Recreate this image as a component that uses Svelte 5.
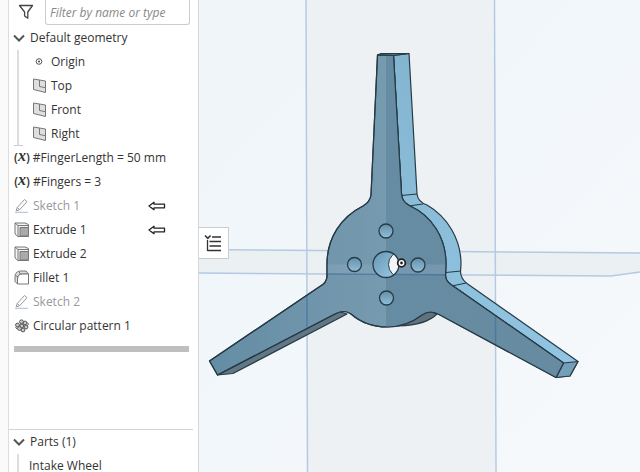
<script>
    let filter = '';

    const planes = ['Top', 'Front', 'Right'];

    const features = [
        { icon: 'variable', name: '#FingerLength = 50 mm' },
        { icon: 'variable', name: '#Fingers = 3' },
        { icon: 'sketch', name: 'Sketch 1', hidden: true, arrow: true },
        { icon: 'extrude', name: 'Extrude 1', arrow: true },
        { icon: 'extrude', name: 'Extrude 2' },
        { icon: 'fillet', name: 'Fillet 1' },
        { icon: 'sketch', name: 'Sketch 2', hidden: true },
        { icon: 'pattern', name: 'Circular pattern 1' }
    ];

    const holes = [[386, 231], [354.5, 264.5], [418, 265], [386.5, 298]];

    const petals = [[7.5, 3.8], [11, 5], [3.5, 7], [7.8, 8], [12, 9], [5.5, 10.5], [9, 12]];
</script>

<div class="workspace">
    <aside>
        <div class="filter">
            <svg width="16" height="16" viewBox="0 0 16 16" fill="none" stroke="#444" stroke-width="1.3">
                <path d="M1.5 1.5h13L9.8 8v6.2L6.6 12V8z" stroke-linejoin="round" />
            </svg>
            <input type="text" aria-label="Filter" placeholder="Filter by name or type" bind:value={filter} />
        </div>

        <div class="features">
            <button class="heading">
                <svg width="12" height="12" viewBox="0 0 12 12" fill="none" stroke="#555" stroke-width="2"><path d="M1 3.5l5 5 5-5" /></svg>
                Default geometry
            </button>
            <ul class="geometry">
                <li>
                    <svg width="16" height="16" viewBox="0 0 16 16" fill="none" stroke="#444"><circle cx="7" cy="7.5" r="2.8" stroke-width=".9" /><circle cx="7" cy="7.5" r="1" fill="#444" stroke="none" /></svg>
                    Origin
                </li>
                {#each planes as plane}
                    <li>
                        <svg width="16" height="16" viewBox="0 0 16 16" fill="#dedede" stroke="#777">
                            <path d="M1.500 1l12 2v11.500l-12-3z" /><path d="M7.500 2v6.500l6 1.200" fill="none" />
                        </svg>
                        {plane}
                    </li>
                {/each}
            </ul>

            <ul class="history">
                {#each features as feature}
                    <li class:hidden={feature.hidden}>
                        {#if feature.icon === 'variable'}
                            <span class="variable">(<i>x</i>)</span>
                        {:else}
                            <svg width="16" height="16" viewBox="0 0 16 16" fill="none" stroke="#777">
                                {#if feature.icon === 'sketch'}
                                    <path d="M3.2 9.5L10.5 1.500l2.500 2.200-7.300 8-3.600 1.200z" stroke="#999" /><path d="M3.200 9.500l2.500 2.200" stroke="#999" /><path d="M1 14.300h13" stroke="#a9b9d8" />
                                {:else if feature.icon === 'extrude'}
                                    <path d="M1 1h10l3.500 1.500v12H4L1 12z" fill="#f4f4f4" /><path d="M1 1l3 2.500v11M4 3.500h10.500" /><path d="M6 5.500h8.500v8.500H6z" fill="#aaa" />
                                {:else if feature.icon === 'fillet'}
                                    <path d="M1 11.500V7q0-6 6-6h5l2.500 3h-6q-5 0-5 5V14z" fill="#ddd" /><path d="M3.500 14V9q0-5 5-5h6V14z" fill="#fff" /><path d="M1.500 5.500l3 1.500M5 1.500l1.500 3" />
                                {:else}
                                    {#each petals as [x, y]}
                                        <circle cx={x} cy={y} r="1.9" fill="#ccc" stroke="#555" />
                                    {/each}
                                    <path d="M13 4.500l1.500 1.500-1 1.500M1.500 9l1.500 2" stroke="#555" />
                                {/if}
                            </svg>
                        {/if}
                        <span class="name">{feature.name}</span>
                        {#if feature.arrow}
                            <svg class="arrow" width="18" height="10" viewBox="0 0 18 10" fill="#fff" stroke="#222" stroke-width="1.3" stroke-linejoin="round">
                                <path d="M1 5l5-3.7V3.2h10.5v3.6H6v1.9z" />
                            </svg>
                        {/if}
                    </li>
                {/each}
            </ul>
            <div class="rollback"></div>
        </div>

        <div class="parts">
            <button class="heading">
                <svg width="12" height="12" viewBox="0 0 12 12" fill="none" stroke="#555" stroke-width="2"><path d="M1 3.5l5 5 5-5" /></svg>
                Parts (1)
            </button>
            <ul><li>Intake Wheel</li></ul>
        </div>
    </aside>

    <main>
        <svg class="view" viewBox="199 0 441 472" preserveAspectRatio="xMinYMin slice">
            <defs>
                <linearGradient id="sky" x1="0" y1="0" x2="1" y2="1">
                    <stop offset="0" stop-color="#eff5f9" /><stop offset="1" stop-color="#f6f9fc" />
                </linearGradient>
                <linearGradient id="side" x1="0" y1="0" x2="0" y2="1">
                    <stop offset="0" stop-color="#83b5d0" /><stop offset="1" stop-color="#92c5e2" />
                </linearGradient>
                <linearGradient id="bore" x1="0" y1="0" x2="1" y2="1">
                    <stop offset="0" stop-color="#6697b4" /><stop offset="1" stop-color="#9ccbe5" />
                </linearGradient>
                <linearGradient id="hole" x1="0" y1="0" x2="0" y2="1">
                    <stop offset="0" stop-color="#648fa8" /><stop offset="1" stop-color="#92bfd8" />
                </linearGradient>
                <linearGradient id="leftFace" gradientUnits="userSpaceOnUse" x1="210" y1="0" x2="386" y2="0">
                    <stop offset="0" stop-color="#658da5" /><stop offset="1" stop-color="#779bb0" />
                </linearGradient>
                <linearGradient id="rightFace" gradientUnits="userSpaceOnUse" x1="386" y1="0" x2="563" y2="0">
                    <stop offset="0" stop-color="#668da3" /><stop offset="1" stop-color="#688ca1" />
                </linearGradient>
                <path id="face" d="M377.5 55L393.5 55.5L401.5 194Q402 202 410 206C432 216 446 238 446 264L445.500 276Q446 282 453 286L563.500 363L556 377.500L440 315Q430 309 422 315Q406 327 387 327Q366 327 351 314Q344 309 335 314L217.500 375L209.500 361L319 287Q327 283 327 276V264C327 238 341 217 363 206Q370 202 371 195Z" />
                <clipPath id="faceClip"><use href="#face" /></clipPath>
                <clipPath id="boreClip"><circle cx="386" cy="264.500" r="13" /></clipPath>
            </defs>

            <rect x="199" width="441" height="472" fill="url(#sky)" />
            <path d="M306 0h188l1 472H307.500z" fill="#edf1f4" />
            <path d="M199 250L640 253V272L611 276L199 273z" fill="#ebf0f3" />
            <g fill="none" stroke="#b4cae3" stroke-width="1.500">
                <path d="M306 0L307.500 472M494.500 0L496 472" />
                <path d="M199 249.500L640 253M199 273L611 276L640 272" />
            </g>

            <g stroke="#263b46" stroke-width="1.200" stroke-linejoin="round">
                <path d="M217.500 375L233 373.500L347 314L338 311z" fill="#617785" />
                <path d="M399 326Q426 325 437 314L428 311z" fill="#60737e" />
                <path d="M393.500 55.500L409 53.500L417 194Q418 202 427 205C448 217 461 240 461 264L460.500 272Q461 279 467 283.500L578 361.500L570 376L556 377.500L563.500 363L453 286Q446 282 445.500 276V264C446 238 432 216 410 206Q402 202 401.500 194z" fill="url(#side)" />
                <path d="M377.500 55L381 53.500L409 53.500L393.500 55.500z" fill="#577484" />
                <path d="M563.500 363L578 361.500L570 376L556 377.500z" fill="#739fb8" />
                <path d="M401.500 195.500L417 194M408.500 206L423 204M446 272.500L461 271M452 286L466 283" />
                <use href="#face" fill="url(#leftFace)" />
            </g>
            <g clip-path="url(#faceClip)">
                <path d="M386 50V330H580V50z" fill="url(#rightFace)" />
                <path d="M386 330H580V390H386z" fill="url(#rightFace)" />
                <path d="M320 264.500H450V274H320z" fill="#94afc3" opacity=".35" />
                <path d="M306 0L307.500 472M494.500 0L496 472M199 273L611 276" stroke="#416f9e" stroke-width="1.500" opacity=".65" />
            </g>
            <use href="#face" fill="none" stroke="#263b46" stroke-width="1.200" />

            {#each holes as [x, y]}
                <circle cx={x} cy={y} r="7" fill="url(#hole)" stroke="#263b46" stroke-width="1.300" />
            {/each}
            <circle cx="386" cy="264.500" r="13" fill="url(#bore)" />
            <circle cx="401.500" cy="264.500" r="13" fill="#f2f5f7" stroke="#263b46" clip-path="url(#boreClip)" />
            <circle cx="386" cy="264.500" r="13" fill="none" stroke="#263b46" stroke-width="1.300" />
            <circle cx="401.500" cy="263" r="3.800" fill="#fff" stroke="#222" stroke-width="1.800" />
            <circle cx="401.500" cy="263" r="1.400" fill="#222" />
        </svg>

        <button class="tab" aria-label="Toggle feature list">
            <svg width="18" height="18" viewBox="0 0 18 18" fill="none" stroke="#333" stroke-width="1.300">
                <path d="M1 1.500l2.800 2.800L6.600 1.500" stroke-width="1.600" /><path d="M8 3h9M3.500 6v11M5.500 7.500H17M5.500 12H17M3.500 16.500H17" />
            </svg>
        </button>
    </main>
</div>

<style>
    :global(body) {
        margin: 0;
    }

    .workspace {
        display: flex;
        height: 100vh;
        overflow: hidden;
        padding-left: 8px;
        box-sizing: border-box;
        background: #fafafa;
        font: 12px/24px "Open Sans", sans-serif;
        color: #333;
    }

    aside {
        display: flex;
        flex-direction: column;
        flex: none;
        width: 189px;
        border-left: 1px solid #ddd;
        border-right: 1px solid #d4d8da;
        background: #fff;
    }

    ul {
        list-style: none;
        margin: 0;
        padding: 0;
    }

    li {
        display: flex;
        align-items: center;
        height: 24px;
        gap: 3px;
        white-space: nowrap;
    }

    svg {
        flex: none;
    }

    button,
    input {
        font: inherit;
        color: inherit;
    }

    .filter {
        display: flex;
        align-items: flex-start;
        gap: 11px;
        height: 26px;
        padding: 0 8px 0 9px;
    }
    .filter svg {
        margin-top: 4px;
    }
    .filter input {
        flex: 1;
        min-width: 0;
        height: 25px;
        box-sizing: border-box;
        padding: 0 4px;
        border: 1px solid #ccc;
        border-top: none;
        border-radius: 0 0 3px 3px;
        font-style: italic;
    }
    .filter input::placeholder {
        color: #888;
    }

    .features {
        flex: 1;
        min-height: 0;
        overflow: hidden;
    }

    .heading {
        display: flex;
        align-items: center;
        gap: 5px;
        width: 100%;
        height: 24px;
        padding: 0 4px;
        border: none;
        background: none;
        line-height: 24px;
    }

    .geometry {
        position: relative;
        margin-left: 8px;
        padding-left: 13px;
        border-left: 2px solid #ddd;
    }
    /* closing foot of the group line */
    .geometry::after {
        content: '';
        position: absolute;
        left: -5px;
        bottom: 0;
        width: 9px;
        height: 1px;
        background: #ccc;
    }

    .history li {
        padding: 0 32px 0 5px;
    }
    .history .name {
        flex: 1;
    }
    .history .hidden {
        color: #999;
    }
    .variable {
        width: 16px;
        display: flex;
        justify-content: center;
        font-weight: 600;
    }
    .variable i {
        font: italic bold 16px/20px "Liberation Serif", serif;
    }

    .rollback {
        height: 6px;
        margin: 8px 9px 0 5px;
        background: #bfbfbf;
    }

    .parts {
        height: 42px;
        margin-right: 5px;
        border-top: 1px solid #d4d4d4;
    }
    .parts ul {
        margin-left: 8px;
        padding-left: 10px;
        border-left: 2px solid #ddd;
    }

    main {
        flex: 1;
        min-width: 0;
        position: relative;
    }
    .view {
        display: block;
        width: 100%;
        height: 100%;
    }
    .tab {
        position: absolute;
        left: 0;
        top: 227px;
        display: flex;
        align-items: center;
        width: 30px;
        height: 32px;
        padding: 0 5px;
        border: 1px solid #ccc;
        border-left: none;
        background: #fff;
    }
</style>
